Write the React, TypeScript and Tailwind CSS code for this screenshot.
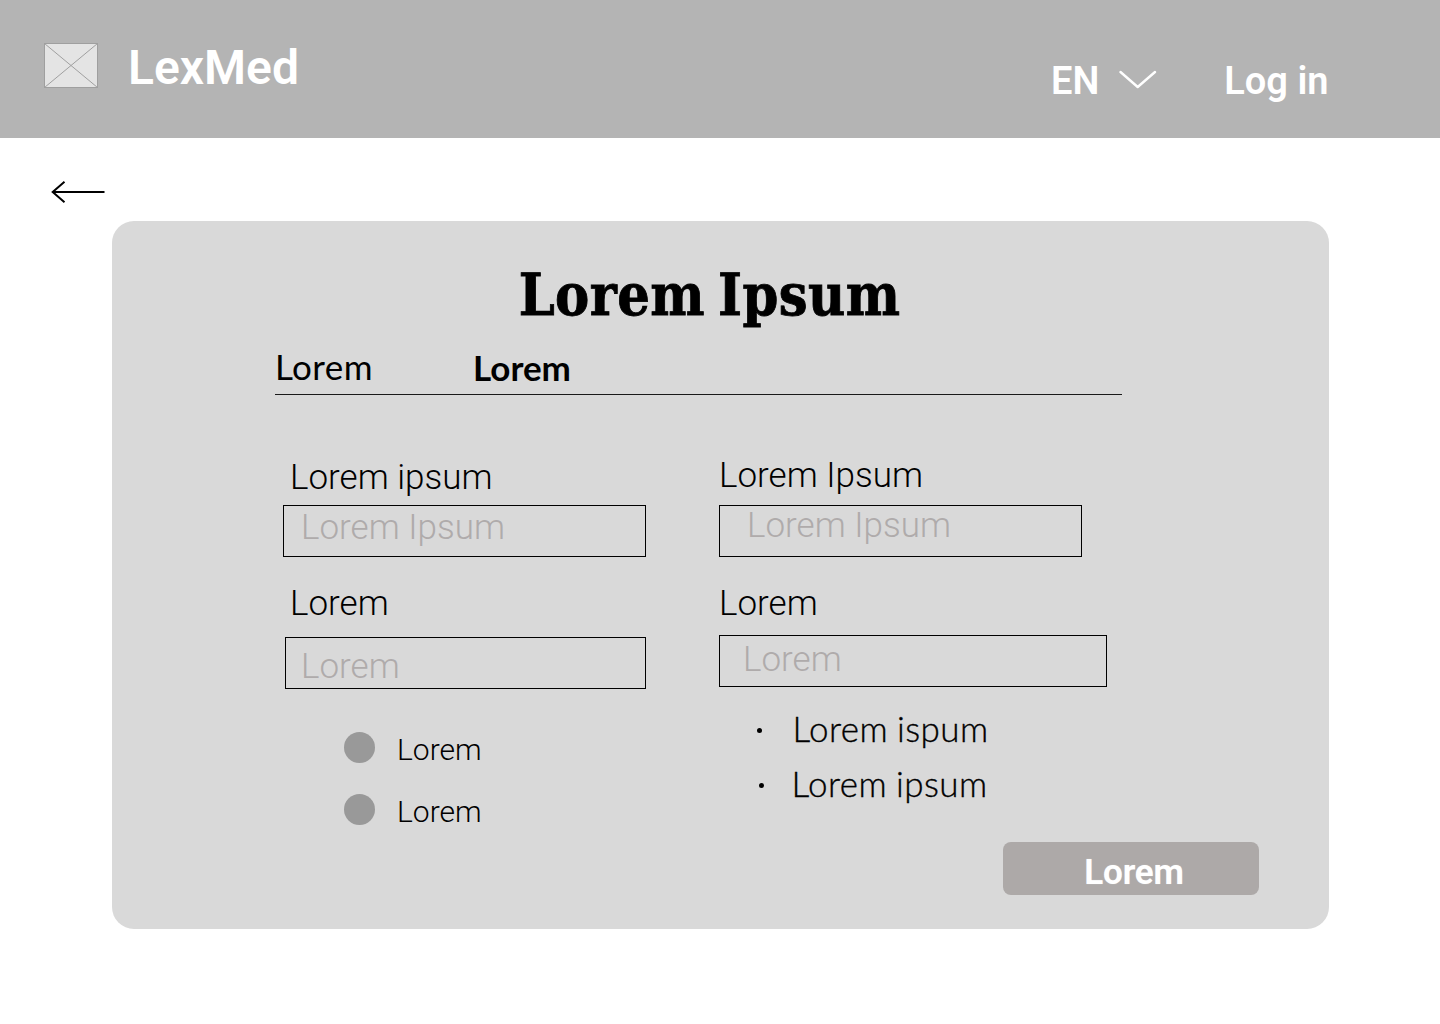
import type { ReactNode } from "react";

function Label({ children }: { children: ReactNode }) {
  return <label className="text-[35px] leading-[40px] font-light whitespace-nowrap text-black">{children}</label>;
}

function Field({ className, children }: { className: string; children: ReactNode }) {
  return (
    <div
      className={`h-[52px] border border-black text-[35px] leading-[40px] font-light whitespace-nowrap text-[#afabab] ${className}`}
    >
      {children}
    </div>
  );
}

function RadioRow({ children }: { children: ReactNode }) {
  return (
    <div className="flex h-[31px] gap-[22px]">
      <span className="size-[31px] shrink-0 rounded-full bg-[#999999]" />
      <span className="pt-[2px] text-[30px] leading-[31px] font-light">{children}</span>
    </div>
  );
}

function BulletRow({ className, children }: { className: string; children: ReactNode }) {
  return (
    <li className={`flex h-9 ${className}`}>
      <span className="mt-[15.5px] size-[5px] shrink-0 rounded-full bg-black" />
      <span className="font-[Lato,sans-serif] text-[35px] leading-[33px] font-light tracking-[0.45px] whitespace-nowrap [word-spacing:-1px] [-webkit-text-stroke:0.35px_black]">
        {children}
      </span>
    </li>
  );
}

export default function App() {
  return (
    <div className="h-[1024px] w-[1440px] overflow-hidden bg-white font-[Roboto,sans-serif] text-black">
      <header className="flex h-[138px] items-start justify-between bg-[#b4b4b4] pr-[111.5px] pl-11 text-white">
        <div className="flex items-start gap-[30px] pt-[43px]">
          <svg width="54" height="45" viewBox="0 0 54 45" fill="#e4e4e4" stroke="#9f9f9f">
            <rect x="0.5" y="0.5" width="53" height="44" />
            <path d="M0.5 0.5L53.5 44.5M53.5 0.5L0.5 44.5" />
          </svg>
          <span className="pt-px text-5xl leading-[48px] font-semibold">LexMed</span>
        </div>
        <nav className="flex items-start pt-[62px] text-[38px] leading-[38px] font-semibold">
          <span>EN</span>
          <svg
            className="mt-2 mr-[67.5px] ml-[19.5px]"
            width="38"
            height="20"
            viewBox="0 0 38 20"
            fill="none"
            stroke="white"
            strokeWidth="2.4"
            strokeLinecap="round"
            strokeLinejoin="round"
          >
            <path d="M1.5 2L18.7 17L36 2" />
          </svg>
          <span>Log in</span>
        </nav>
      </header>

      <div className="h-[83px] pt-[42px] pl-[50px]">
        <svg width="56" height="24" viewBox="0 0 56 24" fill="none" stroke="black" strokeWidth="2">
          <path d="M54.5 12H2.5M14.5 1.7L2.7 12L14.5 22.3" />
        </svg>
      </div>

      <main className="ml-[112px] h-[708px] w-[1217px] rounded-[22px] bg-[#d9d9d9]">
        <h1 className="pt-[44px] pr-[22px] text-center font-['DejaVu_Serif_Condensed','DejaVu_Serif',serif] text-[57px] leading-[60px] font-bold tracking-[0.4px] [word-spacing:-5px] [-webkit-text-stroke:0.8px_black]">
          Lorem Ipsum
        </h1>

        <div className="mt-[25px] ml-[163px] flex h-[45px] w-[847px] border-b border-[#1a1a1a] font-[Lato,sans-serif] text-[35px] leading-[33px]">
          <span className="w-[198px] font-normal tracking-[0.4px]">Lorem</span>
          <span className="pt-px font-bold">Lorem</span>
        </div>

        <div className="flex pt-[61px] pl-[171px]">
          <section className="w-[436px]">
            <div className="mt-[2px] flex flex-col">
              <div className="flex pl-[7px]"><Label>Lorem ipsum</Label></div>
              <Field className="mt-[7px] w-[363px] pt-[2px] pl-[17px]">Lorem Ipsum</Field>
              <div className="mt-[27px] flex pl-[7px]"><Label>Lorem</Label></div>
              <Field className="mt-[13px] ml-[2px] w-[361px] pt-[9px] pl-[15px]">Lorem</Field>
            </div>
            <div className="mt-[43px] ml-[61px] flex flex-col gap-[31px]">
              <RadioRow>Lorem</RadioRow>
              <RadioRow>Lorem</RadioRow>
            </div>
          </section>

          <section>
            <div className="flex flex-col">
              <Label>Lorem Ipsum</Label>
              <Field className="mt-[9px] w-[363px] pl-[27px]">Lorem Ipsum</Field>
              <div className="mt-[27px] flex"><Label>Lorem</Label></div>
              <Field className="mt-[11px] w-[388px] pt-1 pl-[23px]">Lorem</Field>
            </div>
            <ul className="mt-[25px] flex flex-col gap-[19px]">
              <BulletRow className="gap-[31px] pl-[37.5px]">Lorem ispum</BulletRow>
              <BulletRow className="gap-7 pl-[39.5px]">Lorem ipsum</BulletRow>
            </ul>
          </section>
        </div>

        <div className="flex justify-end pt-[17px] pr-[70px]">
          <button className="flex h-[53px] w-64 items-center justify-center rounded-lg bg-[#ada9a8] pt-2 pl-[6px] text-[35px] leading-[38px] font-semibold tracking-[-0.1px] text-white [text-shadow:0_0_1px_#ffffff99]">
            Lorem
          </button>
        </div>
      </main>
    </div>
  );
}
